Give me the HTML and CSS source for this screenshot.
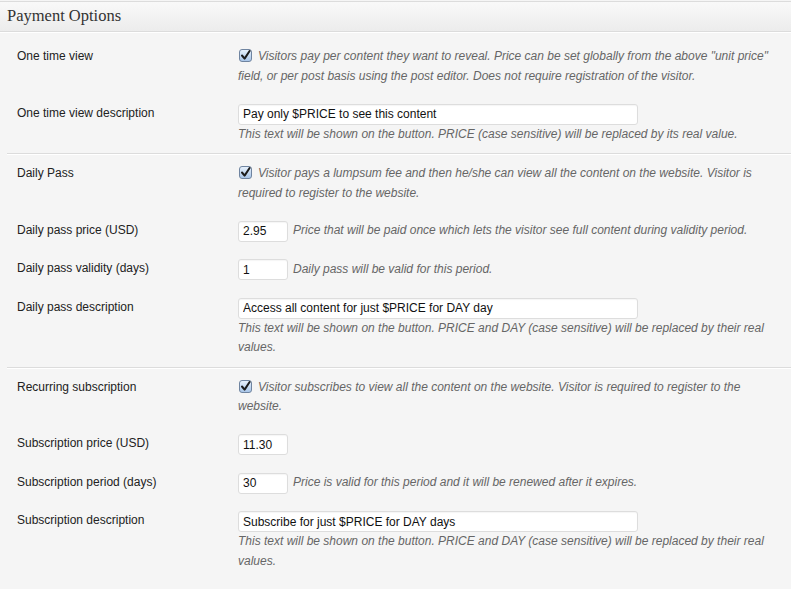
FILE: index.html
```html
<!DOCTYPE html>
<html>
<head>
<meta charset="utf-8">
<title>Payment Options</title>
<link rel="stylesheet" href="styles.css">
</head>
<body>
<div class="postbox">
  <h3 class="hndle">Payment Options</h3>
  <div class="inside">
    <div class="group">
      <div class="row">
        <div class="label">One time view</div>
        <div class="field">
          <p class="desc check-desc"><span class="cb"><svg width="13" height="13" viewBox="0 0 13 13"><path d="M3 6.5 L5.6 9.6 L10.6 2" fill="none" stroke="#1b1b1b" stroke-width="2" stroke-linecap="round" stroke-linejoin="round"/></svg></span>Visitors pay per content they want to reveal. Price can be set globally from the above "unit price" field, or per post basis using the post editor. Does not require registration of the visitor.</p>
        </div>
      </div>
      <div class="row">
        <div class="label">One time view description</div>
        <div class="field">
          <input class="text wide" type="text" value="Pay only $PRICE to see this content">
          <p class="desc">This text will be shown on the button. PRICE (case sensitive) will be replaced by its real value.</p>
        </div>
      </div>
    </div>
    <div class="sep"></div>
    <div class="group">
      <div class="row">
        <div class="label">Daily Pass</div>
        <div class="field">
          <p class="desc check-desc"><span class="cb"><svg width="13" height="13" viewBox="0 0 13 13"><path d="M3 6.5 L5.6 9.6 L10.6 2" fill="none" stroke="#1b1b1b" stroke-width="2" stroke-linecap="round" stroke-linejoin="round"/></svg></span>Visitor pays a lumpsum fee and then he/she can view all the content on the website. Visitor is required to register to the website.</p>
        </div>
      </div>
      <div class="row">
        <div class="label">Daily pass price (USD)</div>
        <div class="field inline">
          <input class="text small" type="text" value="2.95">
          <span class="desc">Price that will be paid once which lets the visitor see full content during validity period.</span>
        </div>
      </div>
      <div class="row">
        <div class="label">Daily pass validity (days)</div>
        <div class="field inline">
          <input class="text small" type="text" value="1">
          <span class="desc">Daily pass will be valid for this period.</span>
        </div>
      </div>
      <div class="row">
        <div class="label">Daily pass description</div>
        <div class="field">
          <input class="text wide" type="text" value="Access all content for just $PRICE for DAY day">
          <p class="desc">This text will be shown on the button. PRICE and DAY (case sensitive) will be replaced by their real values.</p>
        </div>
      </div>
    </div>
    <div class="sep"></div>
    <div class="group">
      <div class="row">
        <div class="label">Recurring subscription</div>
        <div class="field">
          <p class="desc check-desc"><span class="cb"><svg width="13" height="13" viewBox="0 0 13 13"><path d="M3 6.5 L5.6 9.6 L10.6 2" fill="none" stroke="#1b1b1b" stroke-width="2" stroke-linecap="round" stroke-linejoin="round"/></svg></span>Visitor subscribes to view all the content on the website. Visitor is required to register to the website.</p>
        </div>
      </div>
      <div class="row">
        <div class="label">Subscription price (USD)</div>
        <div class="field inline">
          <input class="text small" type="text" value="11.30">
        </div>
      </div>
      <div class="row">
        <div class="label">Subscription period (days)</div>
        <div class="field inline">
          <input class="text small" type="text" value="30">
          <span class="desc">Price is valid for this period and it will be renewed after it expires.</span>
        </div>
      </div>
      <div class="row">
        <div class="label">Subscription description</div>
        <div class="field">
          <input class="text wide" type="text" value="Subscribe for just $PRICE for DAY days">
          <p class="desc">This text will be shown on the button. PRICE and DAY (case sensitive) will be replaced by their real values.</p>
        </div>
      </div>
    </div>
  </div>
</div>
</body>
</html>
```
FILE: styles.css
```css
html, body {
  margin: 0;
  padding: 0;
  background: #f5f5f5;
}
body {
  font-family: "Liberation Sans", Arial, sans-serif;
  font-size: 12px;
  color: #222;
  padding-top: 1px;
}
.postbox {
  background: #f5f5f5;
}
.hndle {
  margin: 0;
  height: 29px;
  line-height: 28px;
  padding: 0 7px;
  font-family: "Liberation Serif", "Times New Roman", serif;
  font-weight: normal;
  font-size: 16.5px;
  color: #333;
  background: linear-gradient(#f9f9f9, #ececec);
  border-top: 1px solid #dcdcdc;
  border-bottom: 1px solid #dcdcdc;
  box-shadow: 0 1px 0 #fff;
}
.inside {
  padding: 15px 0 0 7px;
}
.group {
  display: flex;
  flex-direction: column;
  gap: 17.5px;
  padding: 0 10px 9px 10px;
}
.sep + .group {
  padding-top: 10px;
}
.sep {
  height: 1px;
  background: #dcdcdc;
  box-shadow: 0 1px 0 #fff;
}
.row {
  display: flex;
  align-items: flex-start;
}
.label {
  width: 221px;
  flex: none;
  line-height: 19px;
  color: #222;
}
.field {
  flex: 1;
  min-width: 0;
}
.field.inline {
  display: flex;
  align-items: center;
  gap: 5px;
}
.desc {
  margin: 0;
  font-style: italic;
  color: #666;
  line-height: 19.5px;
}
.cb {
  display: inline-block;
  width: 13px;
  height: 13px;
  box-sizing: border-box;
  margin: 0 6px 0 1px;
  vertical-align: -2px;
  border: 1px solid #6f84a0;
  border-radius: 3px;
  background: linear-gradient(#e6f0fb, #a8c5e8);
  position: relative;
}
.cb svg {
  position: absolute;
  left: -1px;
  top: -1px;
}
.text {
  display: block;
  box-sizing: border-box;
  height: 21px;
  margin: 0;
  padding: 0 4px;
  border: 1px solid #dddddd;
  border-radius: 3px;
  background: #fff;
  box-shadow: inset 0 1px 1px rgba(0,0,0,0.04);
  font-family: "Liberation Sans", Arial, sans-serif;
  font-size: 12px;
  color: #111;
  outline: none;
}
.text.wide {
  width: 400px;
}
.text.small {
  width: 50px;
  flex: none;
}
```
